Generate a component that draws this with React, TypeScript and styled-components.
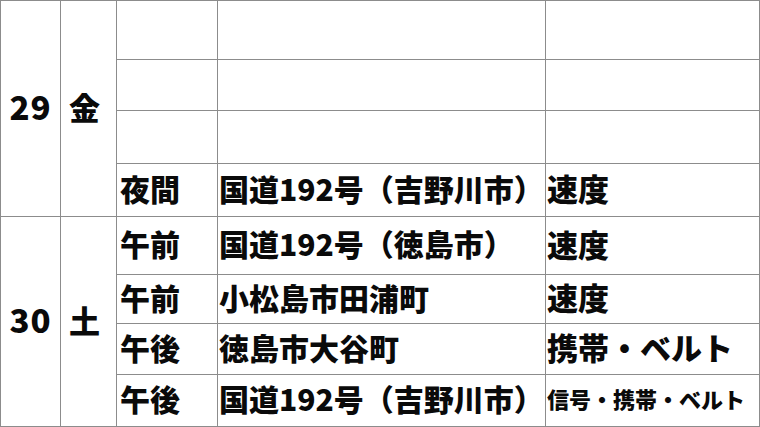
import React from "react";
import styled, { createGlobalStyle } from "styled-components";

const Global = createGlobalStyle`
  html, body { margin: 0; padding: 0; background: #ffffff; }
  body { font-family: "Noto Sans CJK JP", "Noto Sans", sans-serif; }
`;

const Table = styled.div`
  display: grid;
  grid-template-columns: 59px 55px 100px 327px 213px;
  grid-template-rows: 58px 50px 52px 52px 57px 48px 50px 51px;
  gap: 1px;
  padding: 1px;
  width: 760px;
  height: 427px;
  box-sizing: border-box;
  background: #8c8c8c;
`;

const Cell = styled.div`
  background: #ffffff;
  display: flex;
  align-items: center;
  color: #0a0a0a;
  font-weight: 900;
  font-family: "Noto Sans CJK JP", sans-serif;
  white-space: nowrap;
  overflow: hidden;
  line-height: 1;
`;

const DayNum = styled(Cell)<{ $row: number }>`
  grid-column: 1;
  grid-row: ${(p) => p.$row} / span 4;
  justify-content: center;
  font-size: 33px;
  letter-spacing: 1px;
  padding-bottom: 4px;
`;

const Weekday = styled(Cell)<{ $row: number }>`
  grid-column: 2;
  grid-row: ${(p) => p.$row} / span 4;
  justify-content: flex-start;
  padding-left: 8px;
  font-size: 31px;
  padding-bottom: 4px;
`;

const Time = styled(Cell)`
  grid-column: 3;
  font-size: 30px;
  padding-left: 3px;
  padding-bottom: 5px;
`;

const Place = styled(Cell)`
  grid-column: 4;
  font-size: 30px;
  padding-left: 1px;
  padding-bottom: 5px;
`;

const Violation = styled(Cell)<{ $small?: boolean }>`
  grid-column: 5;
  font-size: ${(p) => (p.$small ? "22px" : "31px")};
  padding-left: 1px;
  padding-bottom: 5px;
`;

type Row = { time: string; place: string; violation: string; small?: boolean };

const day29: Row[] = [
  { time: "", place: "", violation: "" },
  { time: "", place: "", violation: "" },
  { time: "", place: "", violation: "" },
  { time: "夜間", place: "国道192号（吉野川市）", violation: "速度" },
];

const day30: Row[] = [
  { time: "午前", place: "国道192号（徳島市）", violation: "速度" },
  { time: "午前", place: "小松島市田浦町", violation: "速度" },
  { time: "午後", place: "徳島市大谷町", violation: "携帯・ベルト" },
  { time: "午後", place: "国道192号（吉野川市）", violation: "信号・携帯・ベルト", small: true },
];

const renderRows = (rows: Row[], key: string) =>
  rows.map((r, i) => (
    <React.Fragment key={`${key}-${i}`}>
      <Time>{r.time}</Time>
      <Place>{r.place}</Place>
      <Violation $small={r.small}>{r.violation}</Violation>
    </React.Fragment>
  ));

export default function App() {
  return (
    <>
      <Global />
      <Table>
        <DayNum $row={1}>29</DayNum>
        <Weekday $row={1}>金</Weekday>
        {renderRows(day29, "a")}
        <DayNum $row={5}>30</DayNum>
        <Weekday $row={5}>土</Weekday>
        {renderRows(day30, "b")}
      </Table>
    </>
  );
}
